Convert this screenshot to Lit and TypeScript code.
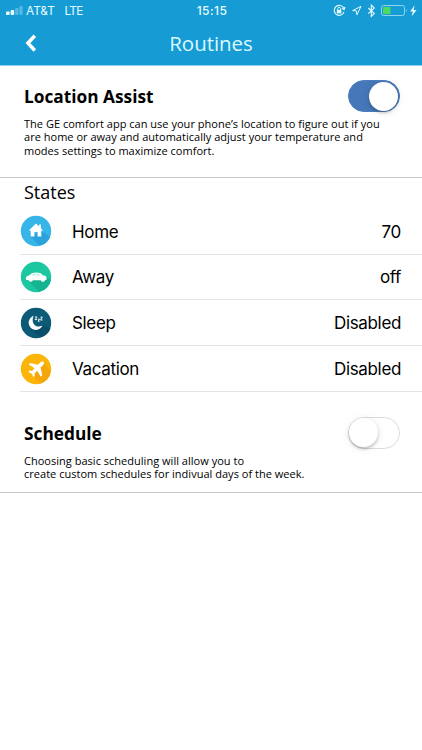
import { LitElement, html, css, svg } from "lit";
import { customElement, property } from "lit/decorators.js";

@customElement("status-bar")
class StatusBar extends LitElement {
  static styles = css`
    :host { display: grid; grid-template-columns: 1fr auto 1fr; align-items: center; height: 22px; color: #e4fbff; font: 11.8px/22px Inter, sans-serif; white-space: pre; }
    .left { display: flex; align-items: center; padding-left: 6px; }
    .carrier { margin-left: 3px; }
    .net { margin-left: 9.5px; letter-spacing: -0.7px; }
    .time { font-weight: 500; font-size: 12px; letter-spacing: 0.45px; padding-left: 2px; }
    .right { display: flex; justify-content: flex-end; padding-right: 4px; }
    svg { display: block; }
  `;
  render() {
    return html`
      <div class="left">
        <svg width="17" height="12" viewBox="0 0 17 12">
          <g fill="#e4fbff"><rect x="0" y="6.5" width="3.6" height="3.5" rx=".8"/><rect x="4.6" y="5" width="3.6" height="5" rx=".8"/></g>
          <g fill="#55b9e4"><rect x="9.2" y="3" width="3.2" height="7" rx=".8"/><rect x="13.4" y="1" width="3.2" height="9" rx=".8"/></g>
        </svg>
        <span class="carrier">AT&amp;T</span><span class="net">LTE</span>
      </div>
      <div class="time">15:15</div>
      <div class="right">
        <svg width="86" height="22" viewBox="332 0 86 22" fill="none" stroke="#e4fbff">
          <path d="M343.8 8.3a5 5 0 1 0 .2 3.6M344.9 6.8l-.7 2.7-2.5-.9" stroke-width="1.1"/>
          <rect x="336.8" y="9.8" width="4.6" height="3.6" fill="#e4fbff" stroke="none"/>
          <path d="M337.7 10V8.7a1.4 1.4 0 0 1 2.8 0V10" stroke-width=".9"/>
          <path d="M361 6.3l-8.4 4.3 3.8.3.5 3.9z" stroke-width="1" stroke-linejoin="round"/>
          <path d="M368.3 8l6 5.6-3 2.9V5.1l3 2.9-6 5.6" stroke-width="1.1"/>
          <rect x="381.5" y="5.5" width="23" height="10" rx="2" stroke="#8dd5f0"/>
          <rect x="383" y="7" width="7.5" height="7" rx=".6" fill="#4cd964" stroke="none"/>
          <path d="M406 8.7q1.6 1.8 0 3.6z" fill="#8dd5f0" stroke="none"/>
          <path d="M414.6 5.2l-4.5 6.2h2.8l-1.4 5 5.1-6.5h-3z" fill="#e4fbff" stroke="none"/>
        </svg>
      </div>`;
  }
}

@customElement("toggle-switch")
class ToggleSwitch extends LitElement {
  @property({ type: Boolean, reflect: true }) on = false;
  static styles = css`
    :host { display: flex; box-sizing: border-box; width: 52px; height: 32px; border: 1.5px solid #dcdcdc; border-radius: 16px; background: #fff; }
    :host([on]) { background: #4677b9; border-color: #4c7fc0; justify-content: flex-end; }
    .knob { width: 29px; height: 29px; border-radius: 50%; background: #fff; box-shadow: 0 2px 3px rgba(0, 0, 0, .2), 0 1px 9px rgba(0, 0, 0, .1); }
    :host([on]) .knob { margin-right: 1px; margin-top: 0.5px; }
  `;
  render() { return html`<div class="knob"></div>`; }
}

const icons = {
  home: svg`<circle cx="16" cy="16" r="15.2" fill="#38b5e8"/>
    <path d="M22.5 16.5l7.8 5.2A15.2 15.2 0 0 1 19.5 30.8L9.8 21z" fill="#2aa3dc"/>
    <path d="M16 8.6l-7.2 6.9h1.9v6h3.7v-4.4h3.2v4.4h3.7v-6h1.9l-2.2-2.1V9.6h-1.9v2z" fill="#fff"/>`,
  away: svg`<circle cx="16" cy="16" r="15.2" fill="#1dc8a1"/>
    <path d="M25.5 15l5.5 4A15.2 15.2 0 0 1 19 30.9L7.5 19z" fill="#15b491"/>
    <path d="M6 18.8c-.5-2.8.4-4 3-4.4l2.8-2.2c3-1.1 6.1-1.1 8.8.1l2.3 1.9 2.7.8c1 .7 1.2 2 1 3.4l-1.6.8a2.2 2.2 0 0 1-4.2 0h-8a2.2 2.2 0 0 1-4.2 0z" fill="#fff"/>
    <path d="M11 14.2l1.8-1.2 2.5-.2v1.6zM16.3 12.8c1.6 0 2.7.3 4.2 1.6h-4.2z" fill="#b5eddf"/>`,
  sleep: svg`<circle cx="16" cy="16" r="15.2" fill="#0c5a76"/>
    <path d="M23 18l7.5 3.4A15.2 15.2 0 0 1 20.3 30.6L11 21.2z" fill="#0a4f69"/>
    <path d="M13.8 8.8a7.2 7.2 0 1 0 8.7 9.7c-4 2.1-7.4.9-9-2.1-1.3-2.4-1-5.2.3-7.6z" fill="#fff"/>
    <path d="M15 10h2.1L15 12.6h2.2M18 12.2h1.6L18 14.2h1.7M20.4 10.2h2L20.4 13h2.1" fill="none" stroke="#fff" stroke-width=".9"/>`,
  vacation: svg`<circle cx="16" cy="16" r="15.2" fill="#fdb409"/>
    <path d="M23.2 9.2l7.5 9A15.2 15.2 0 0 1 20 30.7L13.2 23z" fill="#f5a608"/>
    <path d="M23.4 8.8c-1-.8-2.3-.3-3.2.6l-2.4 2.4-7.6-1.7-1.5 1.5 5.9 3.6-2.6 2.7-2.5-.3-1.2 1.2 3.3 2 2 3.3 1.2-1.2-.3-2.5 2.7-2.6 3.6 5.9 1.5-1.5-1.7-7.6 2.4-2.4c.9-.9 1.6-2.1.4-3.4z" fill="#fff"/>`,
};

const states: { name: string; value: string; icon: keyof typeof icons }[] = [
  { name: "Home", value: "70", icon: "home" },
  { name: "Away", value: "off", icon: "away" },
  { name: "Sleep", value: "Disabled", icon: "sleep" },
  { name: "Vacation", value: "Disabled", icon: "vacation" },
];

@customElement("app-root")
class AppRoot extends LitElement {
  static styles = css`
    :host { display: block; height: 750px; overflow: hidden; background: #fff; color: #000; font-family: "Open Sans", sans-serif; }
    .header { background: #169bd5; height: 65px; border-bottom: 1px solid #8ed2ef; }
    .nav { display: grid; grid-template-columns: 60px 1fr 60px; align-items: center; height: 42px; }
    .back { margin-left: 25px; display: block; }
    .title { text-align: center; color: #dcf9ff; font-size: 20.5px; line-height: 42px; letter-spacing: -0.05px; }
    .panel { box-sizing: border-box; padding: 14px 22px 0 24px; border-bottom: 1px solid #c8c8c8; }
    .location { height: 112px; }
    .schedule { height: 101px; padding-top: 25px; }
    .head { display: flex; justify-content: space-between; height: 32px; }
    .head h2 { margin: 0; font-size: 17.3px; line-height: 33px; font-weight: 700; }
    .desc { margin: 5px 0 0; font-size: 11px; line-height: 13.4px; letter-spacing: 0.02px; white-space: nowrap; }
    .line { display: block; }
    .states h3 { box-sizing: border-box; margin: 0; padding: 1px 24px 0; height: 30.8px; font-weight: 400; font-size: 18px; line-height: 27px; }
    .row { display: flex; align-items: center; box-sizing: border-box; height: 45.8px; margin-left: 20px; padding-right: 21px; border-bottom: 1px solid #e4e4e4; font: 17px/22px Inter, sans-serif; letter-spacing: -0.35px; }
    .row svg { width: 32px; height: 32px; margin-right: 20px; }
    .name { flex: 1; }
    .row span { padding-top: 1px; }
  `;
  render() {
    return html`
      <div class="header">
        <status-bar></status-bar>
        <div class="nav">
          <svg class="back" width="12" height="20" viewBox="0 0 12 20"><path d="M9.8 2.7L3 10.1l6.8 7.4" fill="none" stroke="#fff" stroke-width="3.6"/></svg>
          <div class="title">Routines</div>
        </div>
      </div>
      <section class="panel location">
        <div class="head"><h2>Location Assist</h2><toggle-switch on></toggle-switch></div>
        <p class="desc"><span class="line">The GE comfort app can use your phone’s location to figure out if you</span><span class="line">are home or away and automatically adjust your temperature and</span><span class="line">modes settings to maximize comfort.</span></p>
      </section>
      <section class="states">
        <h3>States</h3>
        ${states.map((s) => html`<div class="row"><svg viewBox="0 0 32 32">${icons[s.icon]}</svg><span class="name">${s.name}</span><span>${s.value}</span></div>`)}
      </section>
      <section class="panel schedule">
        <div class="head"><h2>Schedule</h2><toggle-switch></toggle-switch></div>
        <p class="desc"><span class="line">Choosing basic scheduling will allow you to</span><span class="line">create custom schedules for indivual days of the week.</span></p>
      </section>`;
  }
}
